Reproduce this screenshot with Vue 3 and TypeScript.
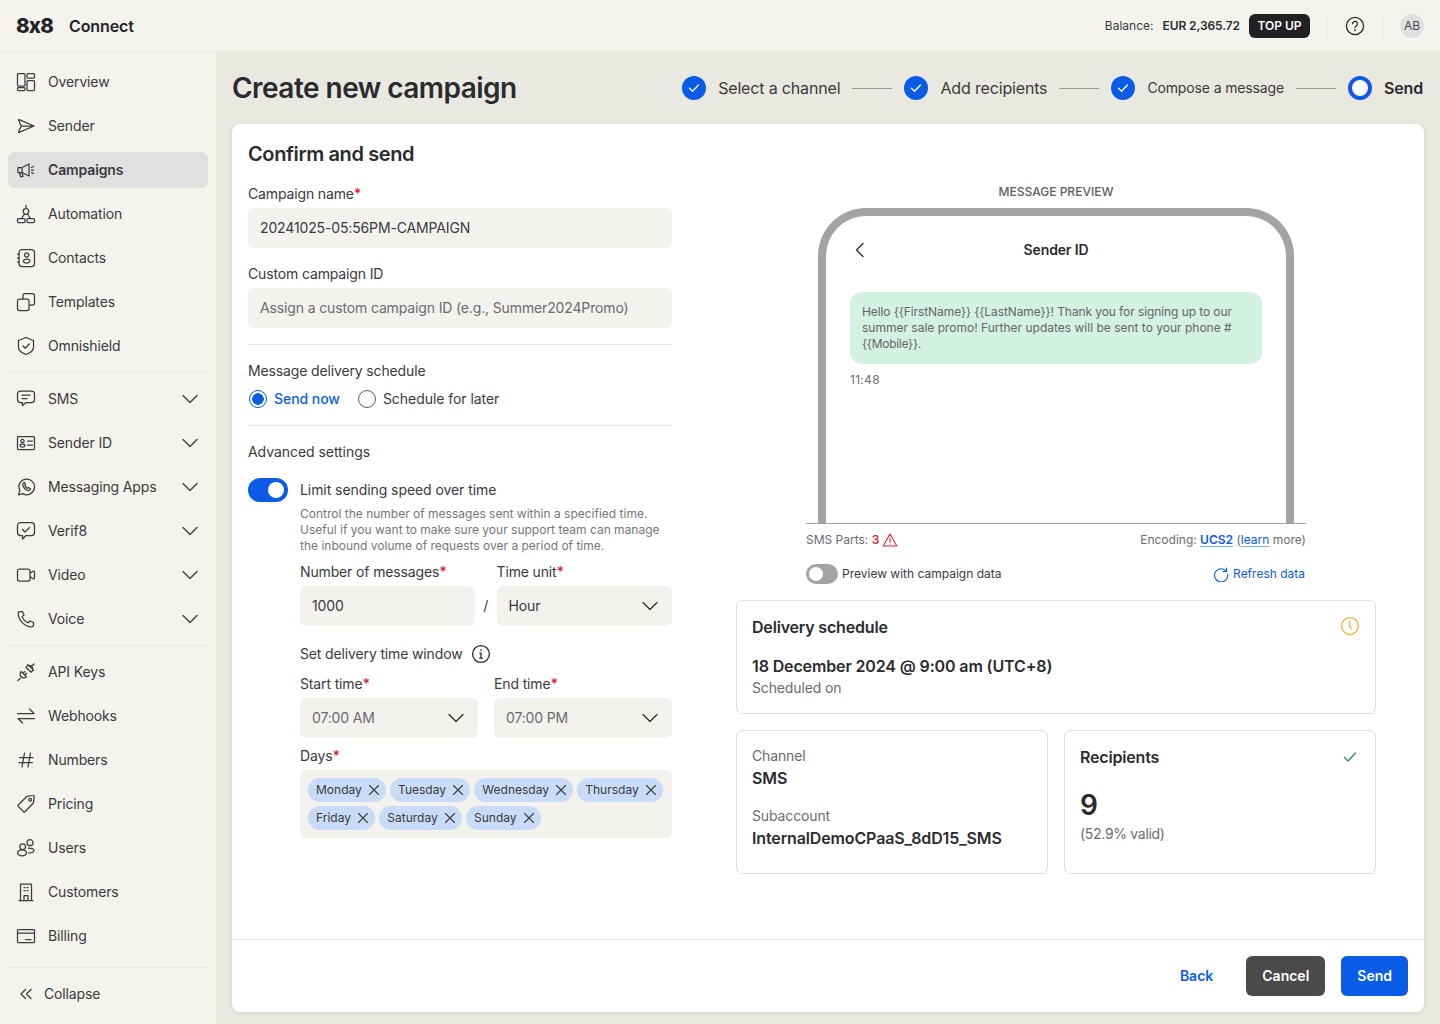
<script setup lang="ts">
const rr = (x: number, y: number, w: number, h: number, r: number): string =>
  `M${x + r} ${y}h${w - 2 * r}a${r} ${r} 0 0 1 ${r} ${r}v${h - 2 * r}a${r} ${r} 0 0 1 -${r} ${r}h-${w - 2 * r}a${r} ${r} 0 0 1 -${r} -${r}v-${h - 2 * r}a${r} ${r} 0 0 1 ${r} -${r}z`
const el = (x: number, y: number, a: number, b: number = a): string =>
  `M${x - a} ${y}a${a} ${b} 0 1 0 ${2 * a} 0a${a} ${b} 0 1 0 -${2 * a} 0z`

const icons: Record<string, string> = {
  overview: rr(1.5, 1.5, 7.5, 12.5, 1) + rr(1.5, 15.5, 7.5, 3, 1) + rr(11, 1.5, 7.5, 4.5, 1) + rr(11, 8.5, 7.5, 10, 1),
  sender: 'M3.2 3.6L18 10L3.2 16.4C2.7 16.6 2.4 16.2 2.6 15.8L5.2 10L2.6 4.2C2.4 3.8 2.7 3.4 3.2 3.6zM5.2 10H18',
  campaigns: 'M2 7.5h4L13 4v12l-7-3.5H2zM6 7.5v5M3.5 12.5l1 4h2.5l-1-4M15.5 7.5l2-1M15.5 10h2M15.5 12.5l2 1',
  automation: 'M10 1v3.5' + el(10, 7.5, 2.8) + 'M8.5 10L5.5 14.5M11.5 10L14.5 14.5' + rr(1.5, 14.5, 7.5, 4, 1) + rr(11, 14.5, 7.5, 4, 1),
  contacts: rr(3, 1.5, 15.5, 17, 3) + el(10.7, 7, 2.2) + el(10.7, 13, 3.2, 2) + 'M1.5 6h2M1.5 10h2M1.5 14h2',
  templates: rr(1.5, 7, 11.5, 11.5, 2) + 'M7 7V3.5a2 2 0 0 1 2-2h7.5a2 2 0 0 1 2 2V11a2 2 0 0 1-2 2H13',
  shield: 'M10 1.5L17.5 4.5V11C17.5 15 13 17.5 10 18.5C7 17.5 2.5 15 2.5 11V4.5zM7 10l2.2 2.2L13.2 8',
  sms: 'M4.5 2h11a3 3 0 0 1 3 3v5.5a3 3 0 0 1-3 3H10l-3.5 3v-3h-2a3 3 0 0 1-3-3V5a3 3 0 0 1 3-3zM6 6h8M6 9.5h5',
  senderid: rr(1.5, 3.5, 17, 13, 1) + el(6.5, 8, 1.6) + el(6.5, 12.5, 2.5, 1.5) + 'M11.5 8h5M11.5 12h5',
  whatsapp: 'M2.5 17.8l1.3-4.3A7.8 7.8 0 1 1 6.7 16.6zM7.5 5.8c-1.3 1-.9 3.3 1 5.5s4.3 2.8 5.4 1.6l.6-1.2-2.2-1.2-.9.8c-1-.4-2.1-1.6-2.6-2.7l.8-.8-1-2.2z',
  verif: 'M4.5 1.5h11a3 3 0 0 1 3 3v7a3 3 0 0 1-3 3H10l-3.5 3.5v-3.5h-2a3 3 0 0 1-3-3v-7a3 3 0 0 1 3-3zM6.5 8.5l2.5 2.5 4.5-4.5',
  video: rr(1.5, 4, 12.5, 12, 2) + 'M14 8.5l3-2.2c.6-.4 1.5-.1 1.5.7v6c0 .8-.9 1.1-1.5.7L14 11.5',
  voice: 'M4 2.5l2.5 0 1.5 3.5-1.8 1.6c.9 2.6 3.4 5.2 6 6.2l1.7-1.8 3.6 1.6v2.4a1.8 1.8 0 0 1-1.8 1.8C8.5 17.8 2.2 11 2.2 4.3A1.8 1.8 0 0 1 4 2.5z',
  api: 'M2 18.5l2.4-2.4M5.2 9.5l5.3 5.3a3.7 3.7 0 0 1-5.3 0 3.7 3.7 0 0 1 0-5.3zM7 11.3L8.8 9.5M8.7 13l1.8-1.8M18 2l-2.4 2.4M10 5.2l5 5a3.6 3.6 0 0 0 .6-5.8 3.6 3.6 0 0 0-5.6.8zM11.6 2.4l6 6',
  webhooks: 'M1.5 7.5H18L13.5 3M18.5 12.5H2L6.5 17',
  numbers: 'M8.5 3L6 17M14.5 3L12 17M3.5 7.5H17M3 12.5H16.5',
  pricing: 'M11 2.3l6-.8a1 1 0 0 1 1.2 1.2l-.8 6.3L9 17.8a1 1 0 0 1-1.4 0l-5.4-5.4a1 1 0 0 1 0-1.4z' + el(14.2, 5.7, 1.4),
  users: el(6.7, 8.7, 2.8) + el(6, 14.8, 4.5, 3) + el(14, 4.7, 3) + 'M12.5 10.2c3.5 0 5.5 1 5.5 2.4s-2 2.4-5.5 2.4',
  customers: 'M3 18.5h14M4.5 18.5V2h11v16.5M8 18.5v-5h4v5M8 5.5h1M11 5.5h1M8 8.5h1M11 8.5h1',
  billing: rr(1.5, 3.5, 17, 13, 1) + 'M1.5 7H18.5M11.5 13.5h3.5M9.5 13.5h.7',
}

interface NavItem { label: string; icon: string; active?: boolean; chevron?: boolean }
const groupA: NavItem[] = [
  { label: 'Overview', icon: 'overview' },
  { label: 'Sender', icon: 'sender' },
  { label: 'Campaigns', icon: 'campaigns', active: true },
  { label: 'Automation', icon: 'automation' },
  { label: 'Contacts', icon: 'contacts' },
  { label: 'Templates', icon: 'templates' },
  { label: 'Omnishield', icon: 'shield' },
]
const groupB: NavItem[] = [
  { label: 'SMS', icon: 'sms', chevron: true },
  { label: 'Sender ID', icon: 'senderid', chevron: true },
  { label: 'Messaging Apps', icon: 'whatsapp', chevron: true },
  { label: 'Verif8', icon: 'verif', chevron: true },
  { label: 'Video', icon: 'video', chevron: true },
  { label: 'Voice', icon: 'voice', chevron: true },
]
const groupC: NavItem[] = [
  { label: 'API Keys', icon: 'api' },
  { label: 'Webhooks', icon: 'webhooks' },
  { label: 'Numbers', icon: 'numbers' },
  { label: 'Pricing', icon: 'pricing' },
  { label: 'Users', icon: 'users' },
  { label: 'Customers', icon: 'customers' },
  { label: 'Billing', icon: 'billing' },
]
const groups = [groupA, groupB, groupC]
const days = ['Monday', 'Tuesday', 'Wednesday', 'Thursday', 'Friday', 'Saturday', 'Sunday']
const chevron = 'M3 6.5L10 13.5L17 6.5'
const bubbleLine1 = 'Hello {{FirstName}} {{LastName}}! Thank you for signing up to our'
const bubbleLine2 = 'summer sale promo! Further updates will be sent to your phone #'
const bubbleLine3 = '{{Mobile}}.'
</script>

<template>
  <div class="app">
    <header class="topbar">
      <div class="brand"><span class="logo">8x8</span><span class="product">Connect</span></div>
      <div class="account">
        <span class="bal-label">Balance:</span>
        <span class="bal-value">EUR 2,365.72</span>
        <button class="topup">TOP UP</button>
        <span class="vr vr-a"></span>
        <svg class="help" width="20" height="20" viewBox="0 0 20 20" fill="none" stroke="#2b2b2e" stroke-width="1.3" stroke-linecap="round"><circle cx="10" cy="10" r="8.6"/><path d="M7.6 7.8a2.4 2.4 0 1 1 3.7 2c-.9.6-1.3 1-1.3 2"/><path d="M10 14.2v.1" stroke-width="1.7"/></svg>
        <span class="vr vr-b"></span>
        <span class="avatar">AB</span>
      </div>
    </header>

    <div class="below">
      <aside class="sidebar">
        <template v-for="(group, gi) in groups" :key="gi">
          <nav class="nav-group">
            <a v-for="item in group" :key="item.label" class="nav-item" :class="{ active: item.active }">
              <svg class="nav-icon" width="20" height="20" viewBox="0 0 20 20" fill="none" stroke="#3c3c3f" stroke-width="1.25" stroke-linecap="round" stroke-linejoin="round"><path :d="icons[item.icon]"/></svg>
              <span class="nav-label">{{ item.label }}</span>
              <svg v-if="item.chevron" width="20" height="20" viewBox="0 0 20 20" fill="none" stroke="#3c3c3f" stroke-width="1.3" stroke-linecap="round" stroke-linejoin="round"><path :d="chevron"/></svg>
            </a>
          </nav>
          <div class="nav-divider" :class="{ last: gi === groups.length - 1 }"></div>
        </template>
        <a class="collapse">
          <svg width="16" height="16" viewBox="0 0 16 16" fill="none" stroke="#3c3c3f" stroke-width="1.3" stroke-linecap="round" stroke-linejoin="round"><path d="M7.5 3.5L3 8l4.5 4.5M13 3.5L8.5 8l4.5 4.5"/></svg>
          <span>Collapse</span>
        </a>
      </aside>

      <main class="main">
        <div class="page-head">
          <h1>Create new campaign</h1>
          <ol class="stepper">
            <li class="step"><svg class="tick" width="24" height="24" viewBox="0 0 24 24"><circle cx="12" cy="12" r="12" fill="#0a5ce6"/><path d="M7.5 12.3l3 3 6-6.3" fill="none" stroke="#fff" stroke-width="1.3" stroke-linecap="round" stroke-linejoin="round"/></svg><span>Select a channel</span></li>
            <li class="step-line"></li>
            <li class="step"><svg class="tick" width="24" height="24" viewBox="0 0 24 24"><circle cx="12" cy="12" r="12" fill="#0a5ce6"/><path d="M7.5 12.3l3 3 6-6.3" fill="none" stroke="#fff" stroke-width="1.3" stroke-linecap="round" stroke-linejoin="round"/></svg><span>Add recipients</span></li>
            <li class="step-line"></li>
            <li class="step"><svg class="tick" width="24" height="24" viewBox="0 0 24 24"><circle cx="12" cy="12" r="12" fill="#0a5ce6"/><path d="M7.5 12.3l3 3 6-6.3" fill="none" stroke="#fff" stroke-width="1.3" stroke-linecap="round" stroke-linejoin="round"/></svg><span class="small-step">Compose a message</span></li>
            <li class="step-line"></li>
            <li class="step current"><span class="ring"></span><span>Send</span></li>
          </ol>
        </div>

        <section class="card">
          <div class="card-body">
            <h2>Confirm and send</h2>
            <div class="columns">
              <form class="form" @submit.prevent>
                <label class="label">Campaign name<i>*</i></label>
                <div class="field">20241025-05:56PM-CAMPAIGN</div>
                <label class="label next">Custom campaign ID</label>
                <div class="field placeholder">Assign a custom campaign ID (e.g., Summer2024Promo)</div>
                <hr class="rule first-rule" />
                <div class="label">Message delivery schedule</div>
                <div class="radios">
                  <span class="radio on"></span><span class="radio-text on">Send now</span>
                  <span class="radio off"></span><span class="radio-text later">Schedule for later</span>
                </div>
                <hr class="rule second-rule" />
                <div class="label advanced">Advanced settings</div>
                <div class="limit">
                  <span class="switch"><span class="knob"></span></span>
                  <div class="limit-body">
                    <div class="limit-title">Limit sending speed over time</div>
                    <p class="limit-desc">Control the number of messages sent within a specified time.<br />Useful if you want to make sure your support team can manage<br />the inbound volume of requests over a period of time.</p>
                    <div class="rate-row">
                      <div class="rate-num">
                        <label class="label">Number of messages<i>*</i></label>
                        <div class="field">1000</div>
                      </div>
                      <span class="slash">/</span>
                      <div class="rate-unit">
                        <label class="label">Time unit<i>*</i></label>
                        <div class="field select">Hour<svg width="20" height="20" viewBox="0 0 20 20" fill="none" stroke="#2b2b2e" stroke-width="1.3" stroke-linecap="round" stroke-linejoin="round"><path :d="chevron"/></svg></div>
                      </div>
                    </div>
                    <div class="window-title">Set delivery time window
                      <svg width="20" height="20" viewBox="0 0 20 20" fill="none" stroke="#2b2b2e" stroke-width="1.3" stroke-linecap="round"><circle cx="10" cy="10" r="8.4"/><path d="M8.8 9.2H10v5M8.8 14.2h2.6"/><path d="M10 6v.1" stroke-width="1.7"/></svg>
                    </div>
                    <div class="time-row">
                      <div class="time-col">
                        <label class="label">Start time<i>*</i></label>
                        <div class="field select muted">07:00 AM<svg width="20" height="20" viewBox="0 0 20 20" fill="none" stroke="#2b2b2e" stroke-width="1.3" stroke-linecap="round" stroke-linejoin="round"><path :d="chevron"/></svg></div>
                      </div>
                      <div class="time-col">
                        <label class="label">End time<i>*</i></label>
                        <div class="field select muted">07:00 PM<svg width="20" height="20" viewBox="0 0 20 20" fill="none" stroke="#2b2b2e" stroke-width="1.3" stroke-linecap="round" stroke-linejoin="round"><path :d="chevron"/></svg></div>
                      </div>
                    </div>
                    <label class="label days-label">Days<i>*</i></label>
                    <div class="chips">
                      <span v-for="d in days" :key="d" class="chip">{{ d }}<svg width="12" height="12" viewBox="0 0 12 12" fill="none" stroke="#3c3c3f" stroke-width="1.1" stroke-linecap="round"><path d="M1.5 1.5l9 9M10.5 1.5l-9 9"/></svg></span>
                    </div>
                  </div>
                </div>
              </form>

              <div class="preview">
                <div class="preview-title">MESSAGE PREVIEW</div>
                <div class="phone-wrap">
                  <div class="phone">
                    <div class="phone-head">
                      <svg class="phone-back" width="20" height="20" viewBox="0 0 20 20" fill="none" stroke="#2b2b2e" stroke-width="1.3" stroke-linecap="round" stroke-linejoin="round"><path d="M13 3.5L6.5 10L13 16.5"/></svg>
                      <span>Sender ID</span>
                    </div>
                    <div class="bubble">
                      <span class="bubble-line tight">{{ bubbleLine1 }}</span>
                      <span class="bubble-line">{{ bubbleLine2 }}</span>
                      <span class="bubble-line tighter">{{ bubbleLine3 }}</span>
                    </div>
                    <div class="time">11:48</div>
                  </div>
                </div>
                <div class="meta">
                  <span class="parts"><span>SMS Parts: <b>3</b></span>
                    <svg width="16" height="16" viewBox="0 0 16 16" fill="none" stroke="#d8283f" stroke-width="1.1" stroke-linejoin="round" stroke-linecap="round"><path d="M8 2L1.2 14h13.6zM8 6.3v4M8 12v.1"/></svg>
                  </span>
                  <span class="encoding">Encoding: <a class="strong">UCS2</a> (<a>learn</a> more)</span>
                </div>
                <div class="data-row">
                  <span class="mini-switch"><span class="mini-knob"></span></span>
                  <span class="data-label">Preview with campaign data</span>
                  <span class="refresh">
                    <svg width="16" height="16" viewBox="0 0 16 16" fill="none" stroke="#0a5ce6" stroke-width="1.1" stroke-linecap="round" stroke-linejoin="round"><path d="M13.5 2v3.5H10M13.5 5.5A6.6 6.6 0 1 0 14.6 8"/></svg>
                    Refresh data
                  </span>
                </div>
                <div class="info schedule">
                  <div class="info-head"><strong>Delivery schedule</strong>
                    <svg class="clock" width="20" height="20" viewBox="0 0 20 20" fill="none" stroke="#f5b133" stroke-width="1.3" stroke-linecap="round" stroke-linejoin="round"><circle cx="10" cy="10" r="8.4"/><path d="M9.6 5.2V10l2 3"/></svg>
                  </div>
                  <div class="value date">18 December 2024 @ 9:00 am (UTC+8)</div>
                  <div class="muted-line">Scheduled on</div>
                </div>
                <div class="info-row">
                  <div class="info">
                    <div class="muted-line">Channel</div>
                    <div class="value">SMS</div>
                    <div class="muted-line sub">Subaccount</div>
                    <div class="value">InternalDemoCPaaS_8dD15_SMS</div>
                  </div>
                  <div class="info">
                    <div class="info-head rec"><strong>Recipients</strong>
                      <svg width="20" height="20" viewBox="0 0 20 20" fill="none" stroke="#1f8a5b" stroke-width="1.2" stroke-linecap="round" stroke-linejoin="round"><path d="M4.5 10.5l3.5 3.5 7.5-8"/></svg>
                    </div>
                    <div class="big">9</div>
                    <div class="muted-line valid">(52.9% valid)</div>
                  </div>
                </div>
              </div>
            </div>
          </div>
          <footer class="card-foot">
            <button class="btn ghost">Back</button>
            <button class="btn dark">Cancel</button>
            <button class="btn primary">Send</button>
          </footer>
        </section>
      </main>
    </div>
  </div>
</template>

<style>
html, body { margin: 0; background: #f4f3ee; }
</style>

<style scoped>
* { box-sizing: border-box; }
.app { width: 1440px; height: 1024px; overflow: hidden; display: flex; flex-direction: column; background: #f4f3ee; font-family: Inter, "Liberation Sans", sans-serif; color: #3a3a3d; font-size: 14px; line-height: 20px; letter-spacing: -0.14px; }
.topbar { height: 52px; flex: none; display: flex; align-items: center; justify-content: space-between; padding: 0 16px; border-bottom: 1px solid #ecebe5; }
.brand { display: flex; align-items: center; gap: 16px; color: #232326; }
.logo { font-size: 20.5px; font-weight: 800; letter-spacing: -0.8px; width: 37px; }
.product { font-size: 16px; font-weight: 600; letter-spacing: -0.1px; }
.account { display: flex; align-items: center; font-size: 12px; letter-spacing: 0; }
.bal-label { color: #3a3a3d; margin-right: 9px; }
.bal-value { font-weight: 600; margin-right: 9px; color: #2b2b2e; letter-spacing: -0.08px; }
.topup { height: 24px; width: 61px; padding: 0; border: 0; border-radius: 6px; background: #212124; color: #fff; font: 600 12px/24px Inter, sans-serif; }
.vr { width: 1px; height: 24px; background: #ecebe5; }
.vr-a { margin: 0 17px; }
.help { margin-right: 18px; }
.vr-b { margin-right: 16px; }
.avatar { width: 24px; height: 24px; border-radius: 50%; background: #e0e0e0; text-align: center; line-height: 24px; color: #4a4a4d; }
.below { flex: 1; display: flex; min-height: 0; }
.sidebar { width: 216px; flex: none; padding: 12px 8px; display: flex; flex-direction: column; }
.nav-group { display: flex; flex-direction: column; gap: 8px; }
.nav-divider { height: 1px; background: #e8e7e1; margin: 8px 0; }
.nav-divider.last { margin-top: 13px; }
.nav-item { height: 36px; display: flex; align-items: center; gap: 12px; padding: 0 8px; border-radius: 6px; color: #3a3a3d; }
.nav-item.active { background: #e0e0e0; font-weight: 600; }
.nav-label { flex: 1; }
.nav-icon { flex: none; }
.collapse { height: 36px; display: flex; align-items: center; gap: 10px; padding-left: 10px; color: #3a3a3d; }
.main { flex: 1; min-width: 0; background: #e9e9e1; padding: 0 16px 12px; display: flex; flex-direction: column; }
.page-head { height: 72px; flex: none; display: flex; align-items: center; justify-content: space-between; }
h1 { margin: 0; font-size: 28px; line-height: 72px; font-weight: 600; color: #2b2b2e; letter-spacing: -0.53px; }
.stepper { list-style: none; margin: 0 1px 0 0; padding: 0; display: flex; align-items: center; gap: 12px; font-size: 16px; color: #3a3a3d; letter-spacing: -0.16px; }
.step { display: flex; align-items: center; gap: 12px; }
.small-step { font-size: 14px; letter-spacing: -0.14px; }
.step-line { width: 40px; height: 1px; background: #9a9a96; }
.current { font-weight: 600; color: #2b2b2e; }
.ring { width: 24px; height: 24px; border-radius: 50%; border: 4px solid #0a5ce6; background: #fff; }
.card { flex: 1; min-height: 0; background: #fff; border-radius: 8px; box-shadow: 0 1px 4px rgba(0, 0, 0, .1); display: flex; flex-direction: column; }
.card-body { flex: 1; min-height: 0; padding: 16px 48px 0 16px; }
h2 { margin: 0 0 16px; font-size: 20px; line-height: 28px; font-weight: 600; color: #2b2b2e; letter-spacing: -0.38px; }
.columns { display: grid; grid-template-columns: 424px 640px; gap: 64px; }
.form { display: flex; flex-direction: column; }
.label { display: block; color: #3a3a3d; }
.label i { font-style: normal; color: #d8283f; font-weight: 600; }
.advanced { letter-spacing: -0.05px; }
.field { height: 40px; margin-top: 4px; padding: 0 12px; border-radius: 6px; background: #f3f2ee; line-height: 40px; color: #3a3a3d; }
.placeholder { color: #6b6b6e; }
.next { margin-top: 16px; }
.rule { width: 100%; border: 0; height: 1px; background: #e4e4e4; margin: 0; }
.first-rule { margin: 16px 0; }
.second-rule { margin: 14px 0 16px; }
.radios { display: flex; align-items: center; height: 24px; margin-top: 6px; letter-spacing: -0.05px; }
.radio { width: 18px; height: 18px; border-radius: 50%; flex: none; }
.radio.on { margin: 0 1px; border: 1.5px solid #0a5ce6; background: radial-gradient(circle, #0a5ce6 0 5.5px, #fff 6px); }
.radio.off { border: 1.3px solid #5a5a5d; margin-left: 18px; }
.radio-text { margin-left: 6px; }
.radio-text.later { margin-left: 7px; }
.radio-text.on { color: #0a5ce6; font-weight: 500; }
.limit { display: flex; gap: 12px; margin-top: 16px; }
.switch { width: 40px; height: 24px; border-radius: 12px; background: #0a5ce6; flex: none; padding: 4px; display: flex; justify-content: flex-end; }
.knob { width: 16px; height: 16px; border-radius: 50%; background: #fff; }
.limit-body { flex: 1; min-width: 0; }
.limit-title { line-height: 24px; letter-spacing: -0.07px; }
.limit-desc { margin: 4px 0 0; font-size: 12px; line-height: 16px; color: #76767a; white-space: nowrap; letter-spacing: 0; }
.rate-row { display: flex; margin-top: 8px; }
.rate-num { width: 175px; flex: none; }
.slash { width: 21.5px; flex: none; text-align: center; align-self: flex-end; line-height: 40px; padding-top: 4px; }
.rate-unit { flex: 1; }
.select { display: flex; align-items: center; justify-content: space-between; padding-right: 12px; }
.muted { color: #6b6b6e; }
.window-title { display: flex; align-items: center; gap: 8px; margin-top: 18px; height: 20px; }
.time-row { display: flex; gap: 16px; margin-top: 10px; }
.time-col { flex: 1; }
.days-label { margin-top: 8px; }
.chips { margin-top: 4px; padding: 8px; min-height: 68px; border-radius: 6px; background: #f3f2ee; display: flex; flex-wrap: wrap; gap: 4px; align-content: flex-start; }
.chip { height: 24px; border-radius: 12px; background: #c9dcf7; padding: 0 6.3px 0 8px; display: inline-flex; align-items: center; gap: 6px; font-size: 12px; line-height: 24px; color: #3a3a3d; letter-spacing: 0; }
.preview { display: flex; flex-direction: column; }
.preview-title { text-align: center; font-size: 12px; line-height: 16px; font-weight: 500; color: #5e5e61; letter-spacing: 0; }
.phone-wrap { width: 500px; align-self: center; margin-top: 8px; border-bottom: 1px solid #a3a3a3; display: flex; justify-content: center; }
.phone { width: 476px; height: 315px; border: 8px solid #a3a3a3; border-bottom: 0; border-radius: 48px 48px 0 0; padding: 24px 24px 0; }
.phone-head { position: relative; text-align: center; font-weight: 600; color: #2b2b2e; line-height: 20px; }
.phone-back { position: absolute; left: 0; top: 0; }
.bubble { margin-top: 32px; padding: 12px; min-height: 72px; border-radius: 12px; background: #d2f2e2; font-size: 12px; line-height: 16px; color: #66666a; letter-spacing: 0; }
.bubble-line { display: block; white-space: nowrap; }
.tight { letter-spacing: -0.09px; }
.tighter { letter-spacing: -0.28px; }
.time { margin-top: 8px; font-size: 12px; line-height: 16px; color: #6b6b6e; letter-spacing: 0.3px; }
.meta { width: 500px; align-self: center; margin-top: 8px; display: flex; justify-content: space-between; font-size: 12px; line-height: 16px; color: #6b6b6e; letter-spacing: 0; }
.parts { display: flex; align-items: center; gap: 3px; }
.parts b { color: #d8283f; font-weight: 600; }
.encoding a { color: #0a5ce6; text-decoration: underline; text-underline-offset: 2px; text-decoration-color: #85adf2; }
.encoding .strong { font-weight: 600; }
.data-row { width: 500px; align-self: center; margin-top: 16px; height: 20px; display: flex; align-items: center; font-size: 12px; letter-spacing: 0; }
.mini-switch { width: 32px; height: 20px; border-radius: 10px; background: #a3a3a3; padding: 3px; flex: none; }
.mini-knob { display: block; width: 14px; height: 14px; border-radius: 50%; background: #fff; }
.data-label { margin-left: 4px; flex: 1; color: #3a3a3d; }
.refresh { display: flex; align-items: center; gap: 4px; color: #0a5ce6; margin-right: 1px; }
.info { border: 1px solid #e0e0e0; border-radius: 6px; padding: 15px; }
.schedule { height: 114px; margin-top: 16px; padding-top: 16px; }
.clock { margin-top: -2px; }
.info-head { display: flex; justify-content: space-between; align-items: center; line-height: 20px; font-size: 16px; height: 20px; color: #2b2b2e; letter-spacing: -0.18px; }
.info-head strong { font-weight: 600; }
.value { font-size: 16px; font-weight: 600; line-height: 24px; color: #2b2b2e; letter-spacing: -0.13px; }
.date { margin-top: 17px; }
.muted-line { color: #6b6b6e; line-height: 20px; }
.sub { margin-top: 16px; }
.info-row { display: grid; grid-template-columns: 312px 312px; gap: 16px; margin-top: 16px; height: 144px; }
.rec { height: 22px; line-height: 22px; }
.big { margin-top: 19px; font-size: 28px; line-height: 36px; font-weight: 600; color: #2b2b2e; }
.valid { margin-top: 1px; letter-spacing: -0.3px; }
.card-foot { height: 73px; flex: none; border-top: 1px solid #e0e0e0; display: flex; justify-content: flex-end; align-items: center; gap: 16px; padding: 0 16px; }
.btn { height: 40px; padding: 0 16px; border: 0; border-radius: 6px; font: 600 14px/40px Inter, sans-serif; }
.ghost { background: transparent; color: #0a5ce6; margin-right: 1px; }
.dark { background: #4a4a4b; color: #fff; }
.primary { background: #0a5ce6; color: #fff; }
</style>
